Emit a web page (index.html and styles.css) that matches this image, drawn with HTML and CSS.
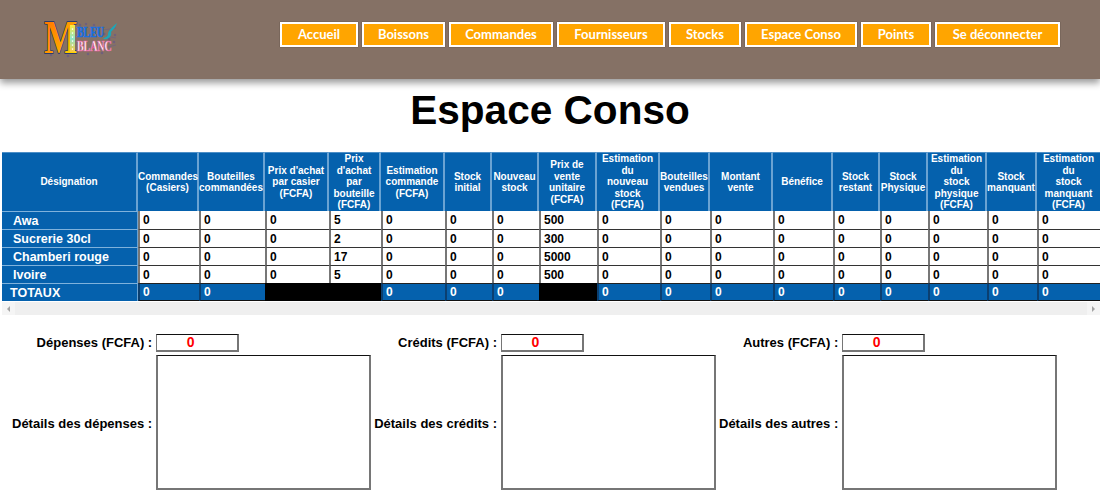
FILE: index.html
```html
<!DOCTYPE html>
<html lang="fr">
<head>
<meta charset="utf-8">
<title>Espace Conso</title>
<link rel="stylesheet" href="styles.css">
</head>
<body>
<header class="topbar">
  <svg class="logo" viewBox="0 -11 76 57" width="76" height="57" aria-label="M Bleu Blanc">
    <defs>
      <linearGradient id="mgrad" x1="0" y1="0" x2="1" y2="1">
        <stop offset="0" stop-color="#ff6a00"/>
        <stop offset=".55" stop-color="#ffa000"/>
        <stop offset="1" stop-color="#fff200"/>
      </linearGradient>
      <linearGradient id="stem" x1="0" y1="0" x2="0" y2="1">
        <stop offset="0" stop-color="#ffe93a"/>
        <stop offset=".5" stop-color="#8fe6c8"/>
        <stop offset="1" stop-color="#ffc83a"/>
      </linearGradient>
    </defs>
    <g class="logo-noise">
      <circle cx="60" cy="12" r="1.2"/><circle cx="65" cy="17" r="1.2"/><circle cx="70" cy="20" r="1"/><circle cx="36" cy="3" r="1"/>
      <circle cx="42" cy="2" r=".9"/><circle cx="66" cy="9" r="1"/><circle cx="7" cy="33" r=".9"/><circle cx="24" cy="34" r="1"/>
      <circle cx="50" cy="3" r=".9"/><circle cx="71" cy="13" r=".9"/><circle cx="58" cy="31" r="1"/><circle cx="44" cy="32" r=".9"/>
      <path d="M60 26l12-3M59 8l13-2M62 14l10 2"/>
    </g>
    <text class="logo-m" transform="translate(0 31) scale(.77 1)">M</text>
    <path class="logo-bar" d="M26 3h5v27h-5z"/>
    <path class="logo-dots" d="M28.500 7v.1M28.500 11v.1M28.500 15v.1M28.500 19v.1M28.500 23v.1M28.500 27v.1"/>
    <text class="logo-bleu" transform="translate(33 14.500) scale(.66 1)">BLEU</text>
    <text class="logo-blanc" transform="translate(33 29) scale(.66 1)">BLANC</text>
    <path class="logo-note" d="M59 17c2-2 5-2 5-5 0-3 4-7 9-11-1 4-4 7-6 9 1 3-1 8-8 7z"/>
  </svg>
  <nav class="nav">
    <a class="nav-btn" href="#">Accueil</a>
    <a class="nav-btn" href="#">Boissons</a>
    <a class="nav-btn" href="#">Commandes</a>
    <a class="nav-btn" href="#">Fournisseurs</a>
    <a class="nav-btn" href="#">Stocks</a>
    <a class="nav-btn" href="#">Espace Conso</a>
    <a class="nav-btn" href="#">Points</a>
    <a class="nav-btn" href="#">Se déconnecter</a>
  </nav>
</header>

<h1 class="title">Espace Conso</h1>

<div class="table-wrap">
  <table class="stock">
    <colgroup>
      <col class="c1"><col class="c2"><col class="c3"><col class="c4"><col class="c5"><col class="c6"><col class="c7"><col class="c8"><col class="c9">
      <col class="c10"><col class="c11"><col class="c12"><col class="c13"><col class="c14"><col class="c15"><col class="c16"><col class="c17"><col class="c18">
    </colgroup>
    <thead>
      <tr>
        <th>Désignation</th>
        <th>Commandes (Casiers)</th>
        <th>Bouteilles commandées</th>
        <th>Prix d'achat<br>par casier<br>(FCFA)</th>
        <th>Prix<br>d'achat<br>par<br>bouteille<br>(FCFA)</th>
        <th>Estimation commande (FCFA)</th>
        <th>Stock<br>initial</th>
        <th>Nouveau stock</th>
        <th>Prix de<br>vente<br>unitaire<br>(FCFA)</th>
        <th>Estimation<br>du<br>nouveau<br>stock<br>(FCFA)</th>
        <th>Bouteilles vendues</th>
        <th>Montant<br>vente</th>
        <th>Bénéfice</th>
        <th>Stock<br>restant</th>
        <th>Stock Physique</th>
        <th>Estimation<br>du<br>stock<br>physique<br>(FCFA)</th>
        <th>Stock manquant</th>
        <th>Estimation<br>du<br>stock<br>manquant<br>(FCFA)</th>
      </tr>
    </thead>
    <tbody>
      <tr><th class="name">Awa</th><td>0</td><td>0</td><td>0</td><td>5</td><td>0</td><td>0</td><td>0</td><td>500</td><td>0</td><td>0</td><td>0</td><td>0</td><td>0</td><td>0</td><td>0</td><td>0</td><td>0</td></tr>
      <tr><th class="name">Sucrerie 30cl</th><td>0</td><td>0</td><td>0</td><td>2</td><td>0</td><td>0</td><td>0</td><td>300</td><td>0</td><td>0</td><td>0</td><td>0</td><td>0</td><td>0</td><td>0</td><td>0</td><td>0</td></tr>
      <tr><th class="name">Chamberi rouge</th><td>0</td><td>0</td><td>0</td><td>17</td><td>0</td><td>0</td><td>0</td><td>5000</td><td>0</td><td>0</td><td>0</td><td>0</td><td>0</td><td>0</td><td>0</td><td>0</td><td>0</td></tr>
      <tr><th class="name">Ivoire</th><td>0</td><td>0</td><td>0</td><td>5</td><td>0</td><td>0</td><td>0</td><td>500</td><td>0</td><td>0</td><td>0</td><td>0</td><td>0</td><td>0</td><td>0</td><td>0</td><td>0</td></tr>
      <tr class="totals"><th class="name total-name">TOTAUX</th><td>0</td><td>0</td><td class="void"></td><td class="void"></td><td>0</td><td>0</td><td>0</td><td class="void"></td><td>0</td><td>0</td><td>0</td><td>0</td><td>0</td><td>0</td><td>0</td><td>0</td><td>0</td></tr>
    </tbody>
  </table>
</div>
<div class="scrollbar">
  <span class="arrow arrow-left"></span>
  <span class="thumb"></span>
  <span class="arrow arrow-right"></span>
</div>

<section class="extras">
  <div class="extra extra-a">
    <label class="extra-label">Dépenses (FCFA) :</label>
    <div class="amount">0</div>
    <label class="extra-label">Détails des dépenses :</label>
    <textarea class="details"></textarea>
  </div>
  <div class="extra extra-b">
    <label class="extra-label">Crédits (FCFA) :</label>
    <div class="amount">0</div>
    <label class="extra-label">Détails des crédits :</label>
    <textarea class="details"></textarea>
  </div>
  <div class="extra extra-c">
    <label class="extra-label">Autres (FCFA) :</label>
    <div class="amount">0</div>
    <label class="extra-label">Détails des autres :</label>
    <textarea class="details"></textarea>
  </div>
</section>
</body>
</html>
```

FILE: styles.css
```css
* { box-sizing: border-box; }
html, body { margin: 0; padding: 0; background: #fff; }
body { font-family: "Liberation Sans", Arial, sans-serif; color: #000; overflow: hidden; height: 495px; }

.topbar {
  height: 79px;
  background: #857165;
  box-shadow: 0 4px 7px rgba(0, 0, 0, .4);
  display: flex;
  align-items: flex-start;
  padding: 22px 40px 0 44px;
}
.logo { display: block; flex: none; margin-top: -11px; }
.logo-m { font: 700 46px "Liberation Serif", serif; fill: url(#mgrad); stroke: #14306e; stroke-width: 1.4; paint-order: stroke; }
.logo-bar { fill: url(#stem); }
.logo-dots { fill: none; stroke: #fff; stroke-width: 1.6; stroke-linecap: round; }
.logo-bleu { font: 700 15px "Liberation Serif", serif; fill: #1a6fe0; stroke: #1a6fe0; stroke-width: .6; }
.logo-blanc { font: 700 15px "Liberation Serif", serif; fill: #fff; stroke: #e8559a; stroke-width: .6; }
.logo-note { fill: #1ca7b8; }
.logo-noise { fill: #6b5a78; stroke: #6f6283; stroke-width: .7; }

.nav {
  margin-left: auto;
  display: grid;
  grid-template-columns: 78px 83px 104px 108px 72px 112px 70px 125px;
  gap: 4px;
}
.nav-btn {
  display: block;
  height: 25px;
  background: #ffa500;
  border: 2px solid #fff;
  box-shadow: 0 0 1px rgba(0, 0, 0, .5);
  color: #fff;
  font: 700 13px/21px Lato, sans-serif;
  text-align: center;
  text-decoration: none;
  white-space: nowrap;
}

.title {
  margin: 7px 0 18px;
  text-align: center;
  font-size: 40.6px;
  line-height: 48px;
  font-weight: 700;
}

.table-wrap { margin-left: 2px; overflow: hidden; }
.stock { border-collapse: separate; border-spacing: 0; table-layout: fixed; width: 1098px; }
.c1 { width: 136px; } .c2 { width: 61px; } .c3 { width: 66px; } .c4 { width: 64px; } .c5 { width: 52px; }
.c6 { width: 64px; } .c7 { width: 47px; } .c8 { width: 47px; } .c9 { width: 58px; } .c10 { width: 63px; }
.c11 { width: 50px; } .c12 { width: 63px; } .c13 { width: 60px; } .c14 { width: 47px; } .c15 { width: 48px; }
.c16 { width: 59px; } .c17 { width: 50px; } .c18 { width: 63px; }

.stock thead th {
  height: 59px;
  padding: 0;
  background: #0561ad;
  border-top: 1px solid #4d8fc7;
  border-right: 2px solid #6aa3d3;
  color: #fff;
  font-size: 10px;
  line-height: 11.5px;
  font-weight: 700;
  text-align: center;
}
.stock thead th:last-child { border-right: 0; }
.stock td, .stock .name { height: 18px; padding: 0; }
.stock td {
  padding-left: 3px;
  background: #fff;
  border-top: 1px solid #333;
  border-left: 2px solid #777;
  font-size: 12px;
  line-height: 16px;
  font-weight: 700;
}
.stock tbody tr:first-child td { border-top: 0; }
.stock .name {
  padding-left: 11px;
  background: #0561ad;
  border-top: 1px solid #7fb2dc;
  border-right: 1px solid #6aa3d3;
  color: #fff;
  font-size: 12.5px;
  font-weight: 700;
  text-align: left;
}
.stock .total-name { padding-left: 8px; }
.totals td {
  background: #0561ad;
  border-top: 1px solid #222;
  border-bottom: 1px solid #111;
  border-left: 2px solid #0b3f70;
  color: #fff;
}
.totals .void { background: #000; border-color: #000; }

.scrollbar { display: flex; height: 13px; margin: 1px 0 0 2px; background: #f0f0f0; }
.arrow { flex: none; width: 13px; background: #f5f5f5; display: flex; align-items: center; justify-content: center; }
.arrow::before { content: ""; border: 3px solid transparent; }
.arrow-left::before { border-right-color: #a3a3a3; border-left-width: 0; }
.arrow-right::before { border-left-color: #a3a3a3; border-right-width: 0; }
.thumb { flex: 1; background: #efefef; }

.extras { display: flex; margin-top: 19px; padding-left: 12px; }
.extra { display: grid; grid-template-columns: auto auto; column-gap: 4px; row-gap: 3px; align-items: center; justify-content: start; }
.extra-b { margin-left: 3px; }
.extra-c { margin-left: 3px; }
.extra-label { font-size: 13px; font-weight: 700; text-align: right; white-space: nowrap; }
.extra-label:nth-child(1) { padding-bottom: 2px; }
.extra-label:nth-child(3) { padding-top: 2px; }
.amount {
  width: 83px;
  height: 18px;
  padding-right: 13px;
  border: 2px solid #767676;
  border-top: 1px solid #111;
  border-left-width: 1px;
  color: #f00;
  font-size: 14px;
  font-weight: 700;
  line-height: 14px;
  text-align: center;
}
.details {
  display: block;
  width: 215px;
  height: 135px;
  margin: 0;
  padding: 0;
  resize: none;
  background: #fff;
  border: 2px solid #767676;
  border-top: 1px solid #111;
  border-radius: 0;
  outline: none;
}
```
